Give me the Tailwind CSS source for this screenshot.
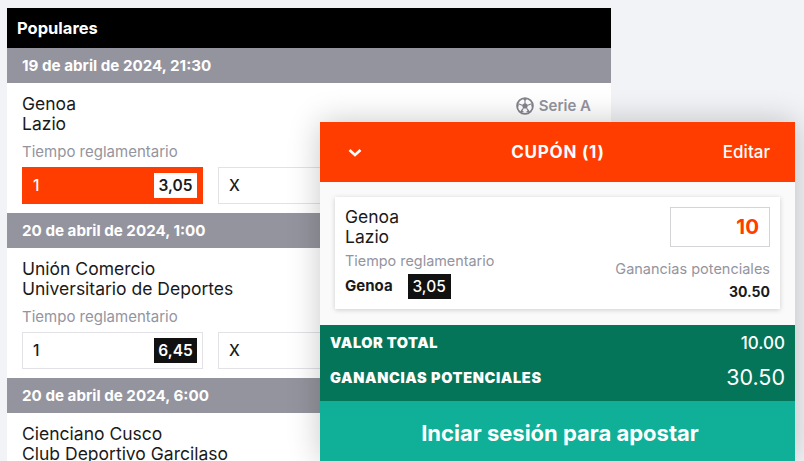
<!DOCTYPE html>
<html lang="es">
<head>
<meta charset="utf-8">
<script src="https://cdn.jsdelivr.net/npm/@tailwindcss/browser@4"></script>
</head>
<body class="relative w-[804px] h-[461px] overflow-hidden bg-[#f1f3f6] font-['Inter',sans-serif] text-[#1a1a1a]">
<main class="ml-[7px] mt-[8px] w-[604px] bg-white">
  <h2 class="h-[40px] bg-black text-white font-bold text-[16.5px] leading-[40px] pl-[10px]">Populares</h2>

  <div class="h-[35px] bg-[#94949e] text-white font-bold text-[15.2px] leading-[35px] pl-[15px]">19 de abril de 2024, 21:30</div>
  <section class="h-[130px] px-[15px] pt-[11px] relative">
    <div class="flex justify-between">
      <p class="text-[17.5px] leading-[20px]">Genoa<br>Lazio</p>
      <div class="flex items-center gap-[5px] h-[24px] pr-[5px] text-[#94949e] font-semibold text-[15px]">
        <svg width="18" height="18" viewBox="0 0 18 18" fill="none" stroke="#84848e" stroke-width="1.8"><circle cx="9" cy="9" r="7.9"/><path d="M9 5.8l3 2.3-1.1 3.5H7.1L6 8.1z" fill="#84848e" stroke="none"/><path d="M9 2v4M11.8 8.2l3.8-1.4M10.7 11.4l2.4 3.3M7.3 11.4l-2.4 3.3M6.2 8.2L2.4 6.8" stroke-width="1.1"/><path d="M6.3 1.6L9 3.8l2.7-2.2zM16.4 5.2l-1.4 4.2 2.2-.4zM1.6 5.2L3 9.4.8 9zM4.2 15.8l3.8-.7-2.8-2.6zM13.8 15.8l-3.8-.7 2.8-2.6z" fill="#84848e" stroke="none"/></svg>
        <span>Serie A</span>
      </div>
    </div>
    <p class="mt-[8px] text-[15px] leading-[20px] text-[#94949e]">Tiempo reglamentario</p>
    <div class="mt-[5px] flex gap-[15px]">
      <div class="w-[181px] h-[37px] bg-[#ff3d00] text-white flex items-center justify-between pl-[11px] pr-[6px] font-medium text-[15.5px]">
        <span>1</span><span class="w-[43px] h-[25px] bg-white text-[#1a1a1a] text-center font-semibold leading-[25px]">3,05</span>
      </div>
      <div class="w-[181px] h-[37px] bg-white border border-[#e2e2e6] flex items-center justify-between pl-[10px] pr-[5px] font-medium text-[15.5px]">
        <span>X</span>
      </div>
    </div>
  </section>

  <div class="h-[35px] bg-[#94949e] text-white font-bold text-[15.2px] leading-[35px] pl-[15px]">20 de abril de 2024, 1:00</div>
  <section class="h-[130px] px-[15px] pt-[11px]">
    <p class="text-[17.5px] leading-[20px]">Unión Comercio<br>Universitario de Deportes</p>
    <p class="mt-[8px] text-[15px] leading-[20px] text-[#94949e]">Tiempo reglamentario</p>
    <div class="mt-[5px] flex gap-[15px]">
      <div class="w-[181px] h-[37px] bg-white border border-[#e2e2e6] flex items-center justify-between pl-[10px] pr-[5px] font-medium text-[15.5px]">
        <span>1</span><span class="w-[43px] h-[25px] bg-[#111111] text-white text-center font-semibold leading-[25px]">6,45</span>
      </div>
      <div class="w-[181px] h-[37px] bg-white border border-[#e2e2e6] flex items-center justify-between pl-[10px] pr-[5px] font-medium text-[15.5px]">
        <span>X</span>
      </div>
    </div>
  </section>

  <div class="h-[35px] bg-[#94949e] text-white font-bold text-[15.2px] leading-[35px] pl-[15px]">20 de abril de 2024, 6:00</div>
  <section class="h-[48px] px-[15px] pt-[11px] overflow-hidden">
    <p class="text-[17.5px] leading-[20px]">Cienciano Cusco<br>Club Deportivo Garcilaso</p>
  </section>
</main>

<aside class="absolute left-[320px] top-[122px] w-[475px] h-[339px] bg-white shadow-[0_0_30px_rgba(0,0,0,0.22)] flex flex-col">
  <header class="h-[60px] shrink-0 bg-[#ff3d00] text-white flex items-center justify-between pl-[28px] pr-[25px] pt-[2px]">
    <svg width="14" height="10" viewBox="0 0 14 10" fill="none" stroke="white" stroke-width="2.6"><path d="M1.5 2l5.5 5 5.5-5"/></svg>
    <span class="font-bold text-[17px] tracking-[0.75px] ml-[31px]">CUPÓN (1)</span>
    <span class="font-medium text-[17px]">Editar</span>
  </header>
  <div class="h-[143px] shrink-0 bg-[#fafafb] pt-[15px] px-[15px]">
    <div class="h-[112px] bg-white shadow-[0_1px_5px_rgba(0,0,0,0.18)] px-[10px] pt-[10px] flex justify-between">
      <div>
        <p class="text-[17.5px] leading-[20px]">Genoa<br>Lazio</p>
        <p class="mt-[4px] text-[14.4px] leading-[20px] text-[#94949e]">Tiempo reglamentario</p>
        <div class="mt-[3px] flex items-center gap-[15px]">
          <span class="font-bold text-[15px]">Genoa</span>
          <span class="w-[43px] h-[25px] bg-[#111111] text-white text-center font-medium text-[15.5px] leading-[25px]">3,05</span>
        </div>
      </div>
      <div class="flex flex-col items-end">
        <div class="w-[100px] h-[40px] border border-[#d4d4d8] bg-white text-right pr-[10px] text-[#ff3d00] font-bold text-[20.5px] leading-[38px]">10</div>
        <p class="mt-[12px] text-[14.5px] leading-[20px] text-[#94949e]">Ganancias potenciales</p>
        <p class="mt-[3px] font-bold text-[14px] leading-[20px]">30.50</p>
      </div>
    </div>
  </div>
  <div class="h-[76px] shrink-0 bg-[#047558] text-white px-[10px] flex flex-col">
    <div class="h-[36px] flex items-center justify-between">
      <span class="font-black text-[14.5px] tracking-[0.55px]">VALOR TOTAL</span>
      <span class="font-medium text-[17px] mt-[1px]">10.00</span>
    </div>
    <div class="h-[34px] flex items-center justify-between">
      <span class="font-black text-[14.5px] tracking-[0.65px]">GANANCIAS POTENCIALES</span>
      <span class="font-normal text-[21.5px] -mt-[2px]">30.50</span>
    </div>
  </div>
  <button class="flex-1 bg-[#0fb097] text-white font-bold text-[22px] text-center pt-[4px] pl-[5px]">Inciar sesión para apostar</button>
</aside>
</body>
</html>
